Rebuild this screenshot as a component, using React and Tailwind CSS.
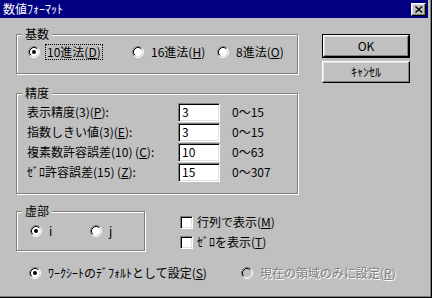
import React from "react";

const font = "font-['Noto_Sans_CJK_JP','Noto_Sans',sans-serif] text-[12px] leading-[14px]";

const sunken =
  "border border-t-[#808080] border-l-[#808080] border-b-white border-r-white shadow-[inset_1px_1px_0_#000,inset_-1px_-1px_0_#dfdfdf]";
const raised =
  "border border-t-white border-l-white border-b-black border-r-black shadow-[inset_-1px_-1px_0_#808080,inset_1px_1px_0_#dfdfdf]";

function U({ children }) {
  return <span className="underline underline-offset-[1px]">{children}</span>;
}

function Radio({ checked, disabled }) {
  return (
    <svg width="12" height="12" viewBox="0 0 12 12" className="shrink-0">
      <circle cx="6" cy="6" r="4.5" fill={disabled ? "#c0c0c0" : "#fff"} />
      <path d="M2.11 9.89 A5.5 5.5 0 0 1 9.89 2.11" fill="none" stroke="#808080" />
      <path d="M9.89 2.11 A5.5 5.5 0 0 1 2.11 9.89" fill="none" stroke="#fff" />
      <path d="M2.82 9.18 A4.5 4.5 0 0 1 9.18 2.82" fill="none" stroke="#000" />
      <path d="M9.18 2.82 A4.5 4.5 0 0 1 2.82 9.18" fill="none" stroke="#dfdfdf" />
      {checked && <circle cx="6" cy="6" r="2" fill="#000" />}
    </svg>
  );
}

function Group({ label, className, children }) {
  return (
    <div
      className={`relative border border-[#808080] shadow-[1px_1px_0_#fff,inset_1px_1px_0_#fff] ${className}`}
    >
      <span className="absolute left-[5px] -top-[8px] px-[3px] bg-[#c0c0c0]">{label}</span>
      {children}
    </div>
  );
}

function Option({ checked, focused, disabled, className = "", children }) {
  return (
    <div className={`flex items-center h-[16px] ${className}`}>
      <Radio checked={checked} disabled={disabled} />
      <span
        className={`ml-[5px] px-[1px] border ${focused ? "border-dotted border-black" : "border-transparent"} ${
          disabled ? "text-[#808080] [text-shadow:1px_1px_0_#fff]" : ""
        }`}
      >
        {children}
      </span>
    </div>
  );
}

function Check({ children }) {
  return (
    <div className="flex items-center h-[20px]">
      <div className={`w-[13px] h-[13px] bg-white ${sunken}`} />
      <span className="ml-[4px]">{children}</span>
    </div>
  );
}

const precision = [
  { label: <>表示精度(3)(<U>P</U>):</>, value: "3", range: "0～15" },
  { label: <>指数しきい値(3)(<U>E</U>):</>, value: "3", range: "0～15" },
  { label: <>複素数許容誤差(10) (<U>C</U>):</>, value: "10", range: "0～63" },
  { label: <>ｾﾞﾛ許容誤差(15) (<U>Z</U>):</>, value: "15", range: "0～307" },
];

export default function App() {
  return (
    <div
      className={`w-[432px] h-[298px] bg-[#c0c0c0] text-black border-r border-b border-black shadow-[inset_-1px_-1px_0_#808080] flex flex-col overflow-hidden ${font}`}
    >
      {/* title bar */}
      <div className="w-[428px] h-[18px] shrink-0 bg-[#000080] flex items-center justify-between pl-[3px] pr-[2px]">
        <span className="text-white">数値ﾌｫｰﾏｯﾄ</span>
        <div className={`w-[15px] h-[13px] bg-[#c0c0c0] flex items-center justify-center ${raised}`}>
          <svg width="8" height="7" viewBox="0 0 8 7">
            <path d="M0.5 0.5 L7 6.5 M7 0.5 L0.5 6.5" stroke="#000" strokeWidth="1.4" />
          </svg>
        </div>
      </div>

      {/* top row */}
      <div className="flex mt-[16px]">
        <div className="flex flex-col ml-[16px]">
          <Group label="基数" className="w-[282px] h-[40px]">
            <div className="flex pt-[9px] pl-[11px]">
              <Option checked focused className="w-[104px]">
                10進法(<U>D</U>)
              </Option>
              <Option className="w-[85px]">
                16進法(<U>H</U>)
              </Option>
              <Option>
                8進法(<U>O</U>)
              </Option>
            </div>
          </Group>

          <Group label="精度" className="w-[282px] h-[101px] mt-[19px]">
            <div className="flex flex-col pt-[8px] pl-[10px]">
              {precision.map((row, i) => (
                <div key={i} className="flex items-center h-[20px]">
                  <span className="w-[151px]">{row.label}</span>
                  <div className={`w-[42px] h-[19px] bg-white pl-[3px] flex items-center ${sunken}`}>
                    {row.value}
                  </div>
                  <span className="ml-[12px]">{row.range}</span>
                </div>
              ))}
            </div>
          </Group>
        </div>

        <div className="flex flex-col ml-[24px]">
          <div className="w-[88px] h-[24px] border border-black">
            <div className={`w-full h-full flex items-center justify-center ${raised}`}>OK</div>
          </div>
          <div className={`w-[88px] h-[22px] mt-[3px] flex items-center justify-center ${raised}`}>
            ｷｬﾝｾﾙ
          </div>
        </div>
      </div>

      {/* middle row */}
      <div className="flex mt-[17px]">
        <Group label="虚部" className="ml-[16px] w-[129px] h-[40px]">
          <div className="flex pt-[11px] pl-[13px]">
            <Option checked className="w-[60px]">
              i
            </Option>
            <Option>j</Option>
          </div>
        </Group>
        <div className="flex flex-col ml-[35px] pt-[1px]">
          <Check>
            行列で表示(<U>M</U>)
          </Check>
          <Check>
            ｾﾞﾛを表示(<U>T</U>)
          </Check>
        </div>
      </div>

      {/* bottom row */}
      <div className="flex mt-[13px] ml-[29px]">
        <Option checked className="w-[212px]">
          ﾜｰｸｼｰﾄのﾃﾞﾌｫﾙﾄとして設定(<U>S</U>)
        </Option>
        <Option disabled>
          現在の領域のみに設定(<U>R</U>)
        </Option>
      </div>
    </div>
  );
}
